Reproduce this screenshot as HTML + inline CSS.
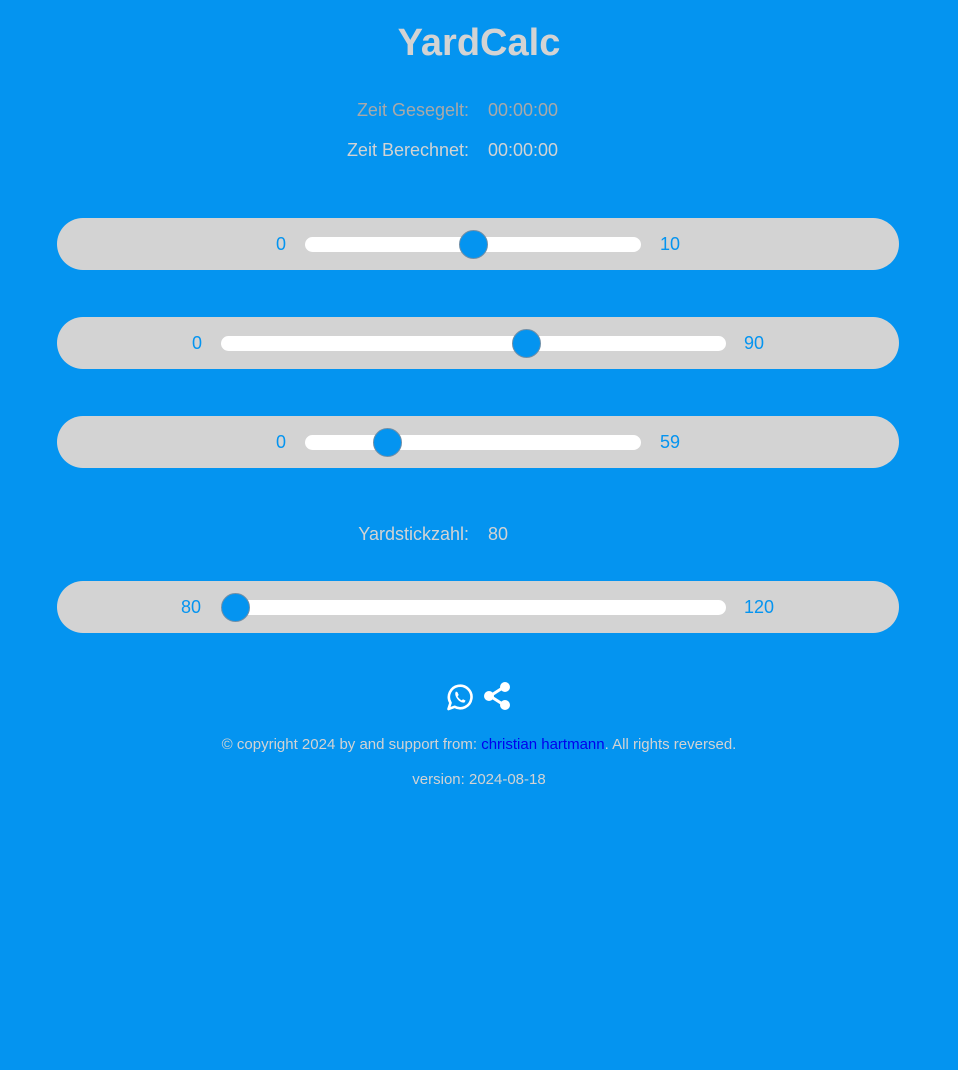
<!DOCTYPE html>
<html><head><style>
body{margin:0;width:958px;height:1070px;background:#0494f0;font-family:"Liberation Sans",sans-serif;position:relative;overflow:hidden}
.a{position:absolute}
h1{position:absolute;margin:0;top:22px;left:0;width:958px;text-align:center;font-size:38px;color:#d3d3d3;font-weight:bold}
.lab{position:absolute;right:489px;font-size:18px;white-space:nowrap}
.val{position:absolute;left:488px;font-size:18px}
.bar{position:absolute;left:57px;width:842px;height:52px;background:#d3d3d3;border-radius:26px}
.tr{position:absolute;height:15px;background:#fff;border-radius:8px}
.th{position:absolute;width:29px;height:29px;border-radius:50%;background:#0494f0;border:1px solid #6f8fa8;box-sizing:border-box}
.n{position:absolute;font-size:18px;color:#0494f0}
</style></head><body>
<h1>YardCalc</h1>
<div class="lab" style="top:100px;color:#a9a9a9">Zeit Gesegelt:</div>
<div class="val" style="top:100px;color:#a9a9a9">00:00:00</div>
<div class="lab" style="top:140px;color:#d3d3d3">Zeit Berechnet:</div>
<div class="val" style="top:140px;color:#d3d3d3">00:00:00</div>

<div class="bar" style="top:218px"></div>
<div class="n" style="top:234px;left:276px">0</div>
<div class="tr" style="top:237px;left:305px;width:336px"></div>
<div class="th" style="top:230px;left:459px"></div>
<div class="n" style="top:234px;left:660px">10</div>

<div class="bar" style="top:317px"></div>
<div class="n" style="top:333px;left:192px">0</div>
<div class="tr" style="top:336px;left:221px;width:505px"></div>
<div class="th" style="top:329px;left:512px"></div>
<div class="n" style="top:333px;left:744px">90</div>

<div class="bar" style="top:416px"></div>
<div class="n" style="top:432px;left:276px">0</div>
<div class="tr" style="top:435px;left:305px;width:336px"></div>
<div class="th" style="top:428px;left:373px"></div>
<div class="n" style="top:432px;left:660px">59</div>

<div class="lab" style="top:524px;color:#d3d3d3">Yardstickzahl:</div>
<div class="val" style="top:524px;color:#d3d3d3">80</div>

<div class="bar" style="top:581px"></div>
<div class="n" style="top:597px;left:181px">80</div>
<div class="tr" style="top:600px;left:221px;width:505px"></div>
<div class="th" style="top:593px;left:221px"></div>
<div class="n" style="top:597px;left:744px">120</div>

<svg class="a" style="left:446px;top:683px" width="28" height="28" viewBox="0 0 28 28">
<path d="M2.5 26 L4.5 19.8 A11.3 11.3 0 1 1 8.6 23.8 Z" fill="none" stroke="#fff" stroke-width="2.6" stroke-linejoin="round"/>
<path d="M10 8.5 C8.8 10 9 12.5 11 15.5 C13 18.5 16.2 20 18.5 19.5 L19.6 17.6 L17 16.2 L15.7 17.4 C14 16.6 12.4 15 11.6 13.4 L12.7 12 L11.5 9.3 Z" fill="#fff"/>
</svg>
<svg class="a" style="left:483px;top:681px" width="29" height="30" viewBox="0 0 29 30">
<line x1="21" y1="6" x2="7" y2="15" stroke="#fff" stroke-width="3"/>
<line x1="21" y1="24" x2="7" y2="15" stroke="#fff" stroke-width="3"/>
<circle cx="22" cy="6" r="5" fill="#fff"/><circle cx="22" cy="24" r="5" fill="#fff"/><circle cx="6" cy="15" r="5" fill="#fff"/>
</svg>
<div class="a" style="top:736px;left:0;width:958px;text-align:center;font-size:15px;color:#d3d3d3">© copyright 2024 by and support from: <span style="color:#0000ee">christian hartmann</span>. All rights reversed.</div>
<div class="a" style="top:771px;left:0;width:958px;text-align:center;font-size:15px;color:#d3d3d3">version: 2024-08-18</div>
</body></html>
